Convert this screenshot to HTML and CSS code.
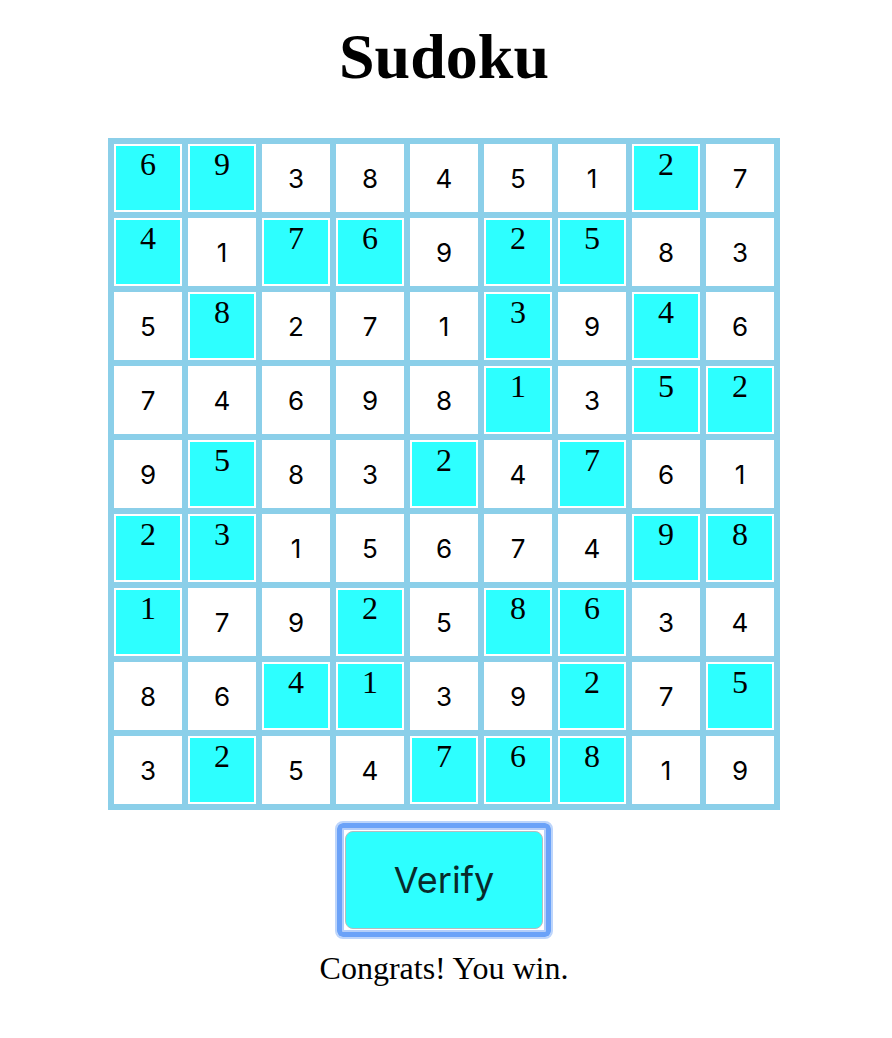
FILE: index.html
```html
<!DOCTYPE html>
<html lang="en">
<head>
<meta charset="utf-8">
<title>Sudoku</title>
<link rel="stylesheet" href="styles.css">
</head>
<body>
<main class="game">
  <h1 class="title">Sudoku</h1>
  <table class="board" aria-label="Sudoku board"><tbody id="rows"></tbody></table>
  <button class="verify" type="button"><span class="verify-face">Verify</span></button>
  <p class="status" role="status">Congrats! You win.</p>
</main>
<script src="board.js"></script>
</body>
</html>
```
FILE: styles.css
```css
* {
  box-sizing: border-box;
}

body {
  margin: 0 4px 0 0;
  background: #fff;
  color: #000;
  font-family: "Liberation Serif", "Times New Roman", serif;
  font-size: 32px;
  line-height: 36px;
}

.game {
  display: flex;
  flex-direction: column;
  align-items: center;
  padding-top: 20px;
}

.title {
  margin: 0 0 44px;
  font-size: 64px;
  line-height: 74px;
}

.board {
  border-collapse: separate;
  border-spacing: 6px;
  background: #8bcfe9;
}

.cell {
  width: 68px;
  height: 68px;
  padding: 2px;
  background: #fff;
  text-align: center;
  vertical-align: top;
}

.given {
  height: 64px;
  background: #2dffff;
}

.entry {
  display: block;
  width: 64px;
  height: 64px;
  padding: 0;
  border: 0;
  outline: 0;
  background: #fff;
  color: #000;
  font-family: Inter, sans-serif;
  font-size: 26px;
  text-align: center;
}

.verify {
  margin-top: 11px;
  padding: 8px;
  border: 2px solid #bdd5fb;
  border-radius: 8px;
  outline: 0;
  background: #fff;
  box-shadow: inset 0 0 0 5px #6ba2f8, inset 0 0 0 7px #b4cefa;
  color: #082b2b;
  font-family: Inter, sans-serif;
  font-size: 36px;
}

.verify-face {
  display: flex;
  align-items: center;
  justify-content: center;
  width: 198px;
  height: 98px;
  border: 1px solid #b4bcc0;
  border-radius: 8px;
  background: #2dffff;
}

.status {
  margin: 11px 0 0;
}
```
FILE: board.js
```js
// An asterisk after a digit marks a given; the rest are the player's entries.
const board = [
  "6* 9* 3 8 4 5 1 2* 7",
  "4* 1 7* 6* 9 2* 5* 8 3",
  "5 8* 2 7 1 3* 9 4* 6",
  "7 4 6 9 8 1* 3 5* 2*",
  "9 5* 8 3 2* 4 7* 6 1",
  "2* 3* 1 5 6 7 4 9* 8*",
  "1* 7 9 2* 5 8* 6* 3 4",
  "8 6 4* 1* 3 9 2* 7 5*",
  "3 2* 5 4 7* 6* 8* 1 9"
];

const rows = document.getElementById("rows");
board.forEach((line, r) => {
  const row = rows.insertRow();
  line.split(" ").forEach((mark, c) => {
    const cell = row.insertCell();
    cell.className = "cell";
    const isGiven = mark.endsWith("*");
    const content = document.createElement(isGiven ? "div" : "input");
    if (isGiven) {
      content.className = "given";
      content.textContent = mark[0];
    } else {
      content.className = "entry";
      content.type = "text";
      content.maxLength = 1;
      content.value = mark;
      content.setAttribute("aria-label", `Row ${r + 1}, column ${c + 1}`);
    }
    cell.append(content);
  });
});
```
